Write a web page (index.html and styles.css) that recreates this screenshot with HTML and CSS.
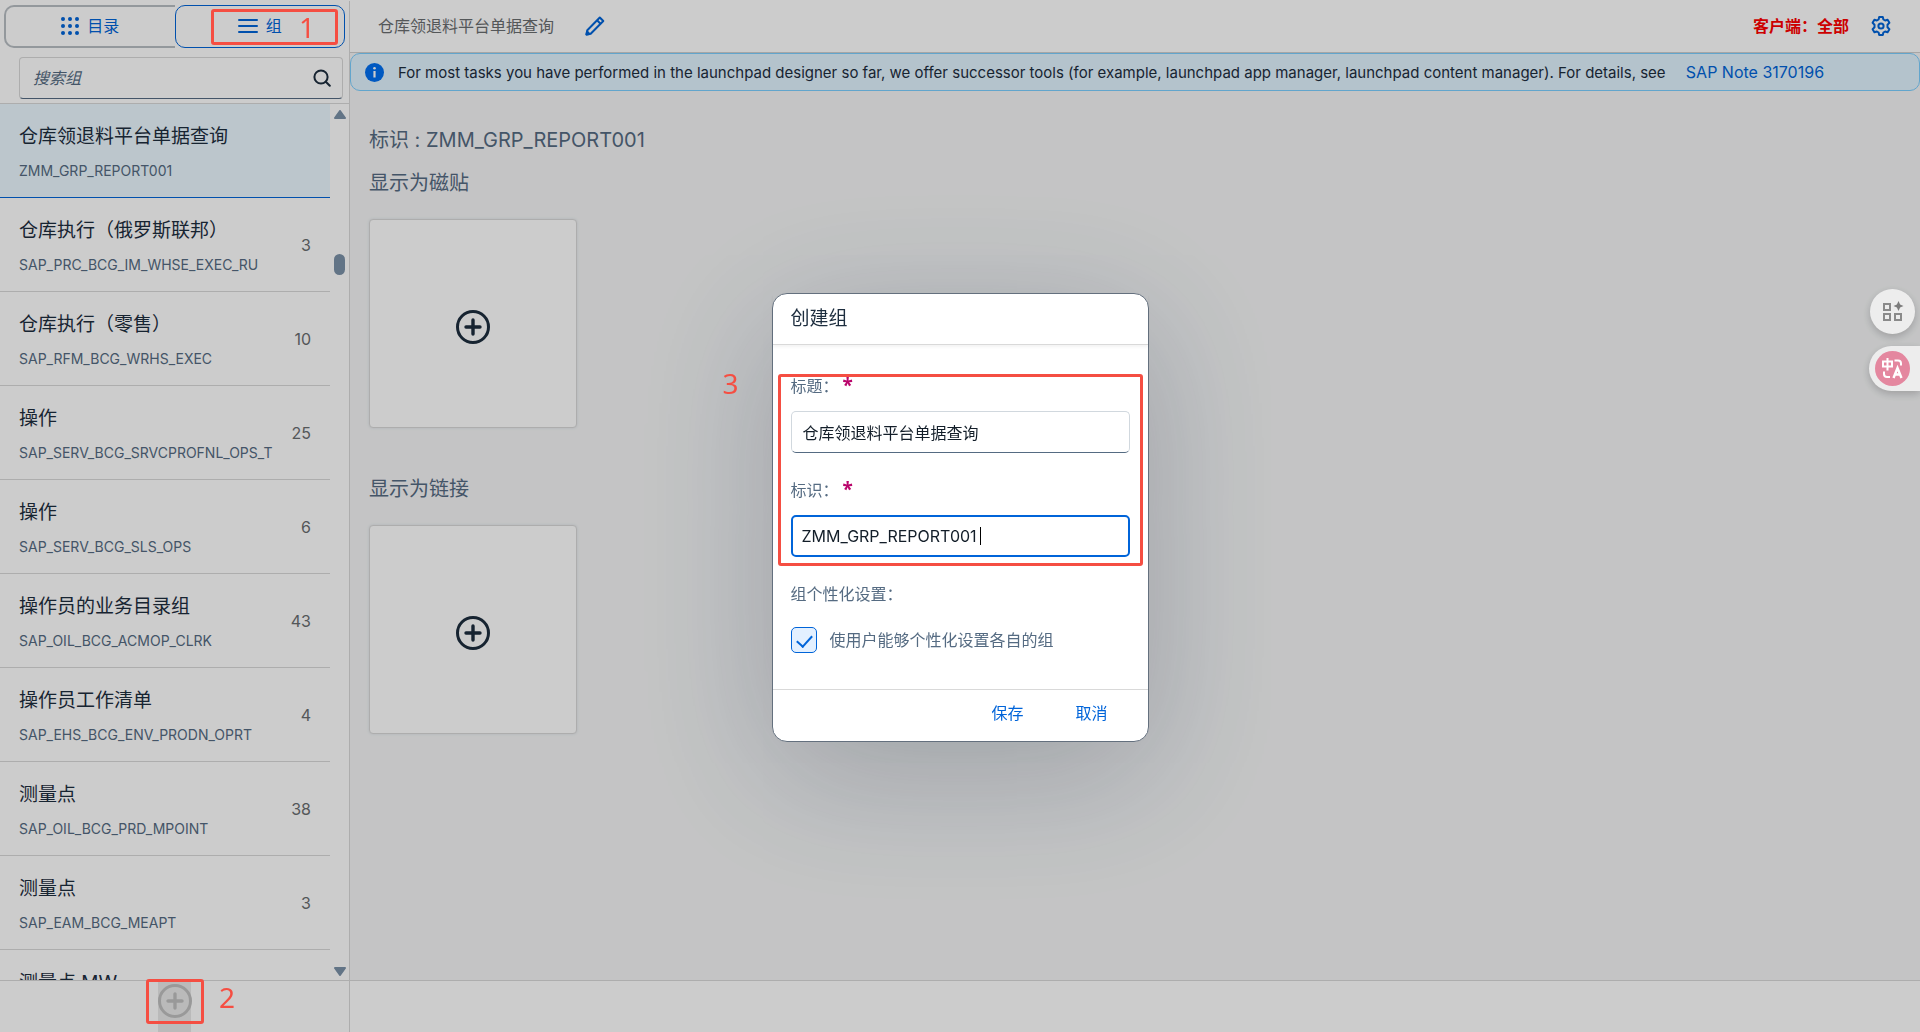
FILE: index.html
```html
<!DOCTYPE html>
<html lang="zh-CN">
<head>
<meta charset="utf-8">
<meta name="viewport" content="width=device-width, initial-scale=1">
<title>仓库领退料平台单据查询</title>
<link rel="stylesheet" href="styles.css">
</head>
<body>
<svg class="sprite" aria-hidden="true">
  <symbol id="plus-circle" viewBox="0 0 34 34">
    <circle cx="17" cy="17" r="15.5" fill="none" stroke="currentColor" stroke-width="3"/>
    <path d="M17 10v14M10 17h14" fill="none" stroke="currentColor" stroke-width="3.4" stroke-linecap="round"/>
  </symbol>
</svg>

<div class="app">
  <aside class="sidebar">
    <div class="switcher">
      <button class="switch switch-catalog" type="button">
        <svg class="icon" width="18" height="18" viewBox="0 0 18 18" fill="currentColor" aria-hidden="true">
          <circle cx="2" cy="2" r="2"/><circle cx="9" cy="2" r="2"/><circle cx="16" cy="2" r="2"/>
          <circle cx="2" cy="9" r="2"/><circle cx="9" cy="9" r="2"/><circle cx="16" cy="9" r="2"/>
          <circle cx="2" cy="16" r="2"/><circle cx="9" cy="16" r="2"/><circle cx="16" cy="16" r="2"/>
        </svg>
        目录
      </button>
      <button class="switch switch-group" type="button">
        <svg class="icon" width="20" height="16" viewBox="0 0 20 16" fill="none" stroke="currentColor" stroke-width="2" stroke-linecap="round" aria-hidden="true">
          <path d="M1 2h18M1 8h18M1 14h18"/>
        </svg>
        组
      </button>
    </div>
    <div class="search">
      <input class="search-input" type="text" placeholder="搜索组" aria-label="搜索组">
      <button class="search-button" type="button" aria-label="搜索">
        <svg width="18" height="18" viewBox="0 0 18 18" fill="none" stroke="currentColor" stroke-width="2" stroke-linecap="round" aria-hidden="true">
          <circle cx="8" cy="8" r="6.6"/><path d="M12.8 12.8l4 4"/>
        </svg>
      </button>
    </div>
    <div class="list-area">
      <ul class="group-list">
        <li class="group selected"><div class="group-text"><span class="group-title">仓库领退料平台单据查询</span><span class="group-id">ZMM_GRP_REPORT001</span></div></li>
        <li class="group"><div class="group-text"><span class="group-title">仓库执行（俄罗斯联邦）</span><span class="group-id">SAP_PRC_BCG_IM_WHSE_EXEC_RU</span></div><span class="count">3</span></li>
        <li class="group"><div class="group-text"><span class="group-title">仓库执行（零售）</span><span class="group-id">SAP_RFM_BCG_WRHS_EXEC</span></div><span class="count">10</span></li>
        <li class="group"><div class="group-text"><span class="group-title">操作</span><span class="group-id">SAP_SERV_BCG_SRVCPROFNL_OPS_T</span></div><span class="count">25</span></li>
        <li class="group"><div class="group-text"><span class="group-title">操作</span><span class="group-id">SAP_SERV_BCG_SLS_OPS</span></div><span class="count">6</span></li>
        <li class="group"><div class="group-text"><span class="group-title">操作员的业务目录组</span><span class="group-id">SAP_OIL_BCG_ACMOP_CLRK</span></div><span class="count">43</span></li>
        <li class="group"><div class="group-text"><span class="group-title">操作员工作清单</span><span class="group-id">SAP_EHS_BCG_ENV_PRODN_OPRT</span></div><span class="count">4</span></li>
        <li class="group"><div class="group-text"><span class="group-title">测量点</span><span class="group-id">SAP_OIL_BCG_PRD_MPOINT</span></div><span class="count">38</span></li>
        <li class="group"><div class="group-text"><span class="group-title">测量点</span><span class="group-id">SAP_EAM_BCG_MEAPT</span></div><span class="count">3</span></li>
        <li class="group"><div class="group-text"><span class="group-title">测量点 MW</span></div></li>
      </ul>
      <div class="scrollbar" aria-hidden="true">
        <svg width="12" height="9" viewBox="0 0 12 9"><path d="M6 1l5 7H1z" fill="currentColor" stroke="currentColor" stroke-width="2" stroke-linejoin="round"/></svg>
        <span class="thumb"></span>
        <svg class="scroll-down" width="12" height="9" viewBox="0 0 12 9"><path d="M6 8L1 1h10z" fill="currentColor" stroke="currentColor" stroke-width="2" stroke-linejoin="round"/></svg>
      </div>
    </div>
    <footer class="sidebar-footer">
      <button class="add-group" type="button" aria-label="创建组" disabled>
        <svg width="34" height="34" aria-hidden="true"><use href="#plus-circle"/></svg>
      </button>
    </footer>
  </aside>

  <main class="content">
    <header class="toolbar">
      <h1 class="page-title">仓库领退料平台单据查询</h1>
      <button class="icon-button" type="button" aria-label="编辑">
        <svg width="20" height="20" viewBox="0 0 20 20" fill="none" stroke="currentColor" stroke-width="2" stroke-linejoin="round" aria-hidden="true">
          <path d="M1.500 18.500l.8-4.200L14.800 1.500l3.500 3.500L5.700 17.700z"/><path d="M12 4.300l3.500 3.500"/><path d="M1.500 18.500l.6-3 2.400 2.400z" fill="currentColor"/>
        </svg>
      </button>
      <span class="client">客户端：全部</span>
      <button class="icon-button" type="button" aria-label="设置">
        <svg width="20" height="20" viewBox="0 0 20 20" fill="none" stroke="currentColor" stroke-width="2" stroke-linejoin="round" aria-hidden="true">
          <path d="M8.200 1h3.600l.6 2.500 1.700 1 2.500-.8 1.800 3.100-1.900 1.900v2.600l1.900 1.900-1.800 3.100-2.500-.8-1.700 1-.6 2.500H8.200l-.6-2.500-1.700-1-2.500.8-1.800-3.100 1.900-1.900V8.700L1.600 6.800l1.800-3.100 2.500.8 1.700-1z"/><circle cx="10" cy="10" r="2.600"/>
        </svg>
      </button>
    </header>
    <div class="message-strip">
      <svg width="19" height="19" viewBox="0 0 19 19" aria-hidden="true">
        <circle cx="9.500" cy="9.500" r="9.500" fill="#0070f2"/><circle cx="9.500" cy="5.200" r="1.300" fill="#fff"/><path d="M9.500 8v6.500" stroke="#fff" stroke-width="2.200"/>
      </svg>
      <p class="message">For most tasks you have performed in the launchpad designer so far, we offer successor tools (for example, launchpad app manager, launchpad content manager). For details, see <a class="note-link" href="#">SAP Note 3170196</a></p>
    </div>
    <div class="details">
      <h2 class="heading">标识 : ZMM_GRP_REPORT001</h2>
      <section class="tile-section">
        <h2 class="heading">显示为磁贴</h2>
        <button class="tile" type="button" aria-label="添加磁贴"><svg width="34" height="34" aria-hidden="true"><use href="#plus-circle"/></svg></button>
      </section>
      <section class="tile-section">
        <h2 class="heading">显示为链接</h2>
        <button class="tile" type="button" aria-label="添加链接"><svg width="34" height="34" aria-hidden="true"><use href="#plus-circle"/></svg></button>
      </section>
    </div>
    <footer class="content-footer"></footer>
  </main>
</div>

<div class="backdrop">
  <form class="dialog" role="dialog" aria-modal="true" aria-labelledby="dialog-title">
    <header class="dialog-header"><h2 class="dialog-title" id="dialog-title">创建组</h2></header>
    <div class="dialog-body">
      <div class="field">
        <label class="label required" for="group-title">标题：</label>
        <input class="text-input" id="group-title" type="text" value="仓库领退料平台单据查询">
      </div>
      <div class="field active">
        <label class="label required" for="group-id">标识：</label>
        <input class="text-input" id="group-id" type="text" value="ZMM_GRP_REPORT001">
        <span class="caret"></span>
      </div>
      <fieldset class="options">
        <legend class="label">组个性化设置：</legend>
        <label class="check"><input class="checkbox" type="checkbox" checked><span>使用户能够个性化设置各自的组</span></label>
      </fieldset>
    </div>
    <footer class="dialog-footer">
      <button class="text-button" type="button">保存</button>
      <button class="text-button" type="button">取消</button>
    </footer>
    <span class="mark mark-fields"></span>
    <span class="step step-fields">3</span>
  </form>
</div>

<span class="mark mark-switch"></span>
<span class="step step-switch">1</span>
<span class="mark mark-add"></span>
<span class="step step-add">2</span>

<div class="float-tools">
  <button class="float-apps" type="button" aria-label="工具">
    <svg width="22" height="22" viewBox="0 0 22 22" fill="none" stroke="#8a8a8a" stroke-width="2" aria-hidden="true">
      <rect x="2" y="3" width="6" height="6"/><rect x="2" y="13" width="6" height="6"/><rect x="13" y="13" width="6" height="6"/>
      <path d="M16.500 0l1.600 3.400 3.400 1.600-3.400 1.600-1.600 3.400-1.600-3.400-3.400-1.600 3.400-1.600z" fill="#7c7c7c" stroke="none"/>
    </svg>
  </button>
  <button class="float-translate" type="button" aria-label="翻译">
    <svg width="35" height="35" viewBox="0 0 35 35" fill="none" stroke="#fff" stroke-width="2" aria-hidden="true">
      <circle cx="17.500" cy="17.500" r="17.500" fill="#e4879f" stroke="none"/>
      <path d="M8 10.500h9v5H8zM12.500 7v12.500"/>
      <path d="M19.500 9.500h3.500q3 0 3 3v2M9 20.500v2.500q0 3 3 3h3"/>
      <path d="M18.500 27l4-10 4 10M20 23.500h5" stroke-width="2.400"/>
    </svg>
  </button>
</div>
</body>
</html>
```
FILE: styles.css
```css
:root {
  --blue: #0064d9;
  --text: #1d2d3e;
  --label: #556b82;
  --line: #d9d9d9;
  --mark: #f54e42;
}

* { box-sizing: border-box; }

body {
  margin: 0;
  color: var(--text);
  font: 16px/24px Inter, "Noto Sans CJK SC", sans-serif;
}

h1, h2, p, ul { margin: 0; padding: 0; font-weight: 400; }
button, input { font: inherit; }
button { padding: 0; border: 0; background: none; color: inherit; cursor: pointer; }
svg { display: block; flex: none; }
.sprite { position: absolute; width: 0; height: 0; }

.app { display: flex; height: 100vh; border-top: 1px solid #fff; background: #f5f6f7; }

/* Sidebar */
.sidebar { display: flex; flex-direction: column; flex: none; width: 350px; border-right: 1px solid var(--line); background: #fff; }
.switcher { display: flex; padding: 4px 4px 0; }
.switch { display: flex; flex: 1; align-items: center; justify-content: center; gap: 8px; height: 43px; padding-bottom: 2px; color: var(--blue); }
.switch-catalog { border: 2px solid #b8bec4; border-right: 0; border-radius: 10px 0 0 10px; }
.switch-group { border: 1px solid var(--blue); border-radius: 10px; }
.search { display: flex; margin: 9px 6px 4px 19px; height: 42px; border: 1px solid var(--line); border-bottom-color: var(--label); border-radius: 4px; }
.search-input { flex: 1; min-width: 0; padding: 0 13px; border: 0; outline: 0; background: none; font-style: italic; }
.search-input::placeholder { color: var(--label); opacity: 1; }
.search-button { padding: 0 11px; }

.list-area { display: flex; flex: 1; min-height: 0; border-top: 1px solid var(--line); }
.group-list { flex: 1; overflow: hidden; list-style: none; }
.group { display: flex; justify-content: space-between; height: 94px; padding: 19px; border-bottom: 1px solid var(--line); }
.group.selected { border-bottom-color: var(--blue); background: #ebf8ff; }
.group-text { display: flex; flex-direction: column; gap: 10px; }
.group-title { font-size: 19px; line-height: 28px; white-space: nowrap; }
.group-id { color: var(--label); font-size: 14px; line-height: 20px; }
.count { align-self: center; color: #6a6d70; }
.scrollbar { display: flex; flex-direction: column; align-items: center; width: 19px; padding: 6px 0 4px; color: #7b91a8; }
.thumb { width: 11px; height: 21px; margin-top: 135px; border-radius: 6px; background: currentColor; }
.scroll-down { margin-top: auto; }

.sidebar-footer, .content-footer { flex: none; height: 52px; border-top: 1px solid var(--line); background: #fff; }
.sidebar-footer { display: flex; justify-content: center; }
.add-group { display: flex; justify-content: center; width: 33px; padding-top: 3px; background: #e9e9e9; color: #c0c0c0; }

/* Content */
.content { display: flex; flex: 1; flex-direction: column; min-width: 0; }
.toolbar { display: flex; align-items: center; height: 52px; padding: 0 29px 2px 28px; border-bottom: 1px solid #d0d0d0; background: #fff; }
.page-title { margin-right: 31px; color: #6a6d70; font-size: 16px; }
.icon-button { color: var(--blue); }
.client { margin: 0 22px 0 auto; color: #f00; font-weight: 700; }
.message-strip { display: flex; align-items: center; gap: 14px; min-height: 38px; padding: 0 14px; border: 1px solid #7bcfff; border-radius: 10px; background: #e1f4ff; }
.message { font-size: 15px; }
.note-link { margin-left: 16px; color: var(--blue); font-size: 16px; text-decoration: none; }
.details { display: flex; flex: 1; flex-direction: column; align-items: flex-start; padding: 35px 19px; }
.heading { color: var(--label); font-size: 20px; line-height: 28px; }
.tile-section { margin-top: 15px; }
.tile-section + .tile-section { margin-top: 47px; }
.tile { display: flex; align-items: center; justify-content: center; width: 208px; height: 209px; margin-top: 22px; padding-top: 6px; border: 1px solid var(--line); border-radius: 4px; background: #fff; box-shadow: 0 0 3px #556b8229; }

/* Dialog */
.backdrop { position: fixed; inset: 0; display: grid; place-items: center; padding-top: 2px; background: #0003; }
.dialog { position: relative; width: 377px; border: 1px solid #64707e; border-radius: 15px; background: #fff; box-shadow: 0 30px 140px #22354840; }
.dialog-header { height: 51px; padding: 11px 18px; border-bottom: 1px solid var(--line); box-shadow: 0 2px 3px #0000000d; }
.dialog-title { font-size: 19px; line-height: 28px; }
.dialog-body { display: flex; flex-direction: column; gap: 25px; padding: 29px 18px 36px; }
.field { position: relative; display: grid; gap: 13px; }
.label { padding: 0; color: var(--label); }
.required::after { content: "*"; margin-left: 4px; color: #ba066c; font: 700 19px/16px "Noto Sans", sans-serif; }
.text-input { width: 100%; height: 42px; padding: 0 11px; border: 1px solid #d1d8de; border-bottom-color: var(--label); border-radius: 5px; outline: 0; background: #fff; color: #131e29; }
.active .text-input { padding: 0 9px; border: 2px solid var(--blue); }
.caret { position: absolute; bottom: 12px; left: 189px; width: 1px; height: 18px; background: #000; }
.options { margin: 0; padding: 0; border: 0; }
.check { display: flex; align-items: center; gap: 13px; margin-top: 21px; color: var(--label); }
.checkbox { position: relative; flex: none; appearance: none; width: 26px; height: 26px; margin: 0; border: 1px solid var(--blue); border-radius: 5px; background: #e3f0ff; }
.checkbox:checked::after { content: ""; position: absolute; top: 4px; left: 8px; width: 7px; height: 13px; border: solid var(--blue); border-width: 0 2px 2px 0; transform: rotate(42deg); }
.dialog-footer { display: flex; justify-content: flex-end; gap: 30px; height: 52px; padding: 0 29px 4px; border-top: 1px solid var(--line); }
.text-button { padding: 0 11px; color: var(--blue); }

/* Step marks */
.mark { position: fixed; border: 3px solid var(--mark); border-radius: 3px; pointer-events: none; }
.step { position: fixed; color: var(--mark); font: 28px/32px "Noto Sans", sans-serif; }
.mark-switch { top: 9px; left: 211px; width: 127px; height: 36px; }
.step-switch { top: 11px; left: 299px; }
.mark-add { bottom: 8px; left: 146px; width: 58px; height: 45px; }
.step-add { bottom: 19px; left: 219px; }
.mark-fields { position: absolute; top: 80px; left: 5px; width: 365px; height: 192px; }
.step-fields { position: absolute; top: 73px; left: -50px; }

/* Floating tools */
.float-tools { position: fixed; top: 289px; right: 0; display: flex; flex-direction: column; align-items: flex-end; gap: 12px; }
.float-tools button { display: flex; align-items: center; height: 45px; background: #ededed; box-shadow: 0 3px 8px #0003; }
.float-apps { justify-content: center; width: 45px; margin-right: 5px; border-radius: 50%; }
.float-translate { width: 51px; padding-left: 6px; border-radius: 23px 0 0 23px; }
```
